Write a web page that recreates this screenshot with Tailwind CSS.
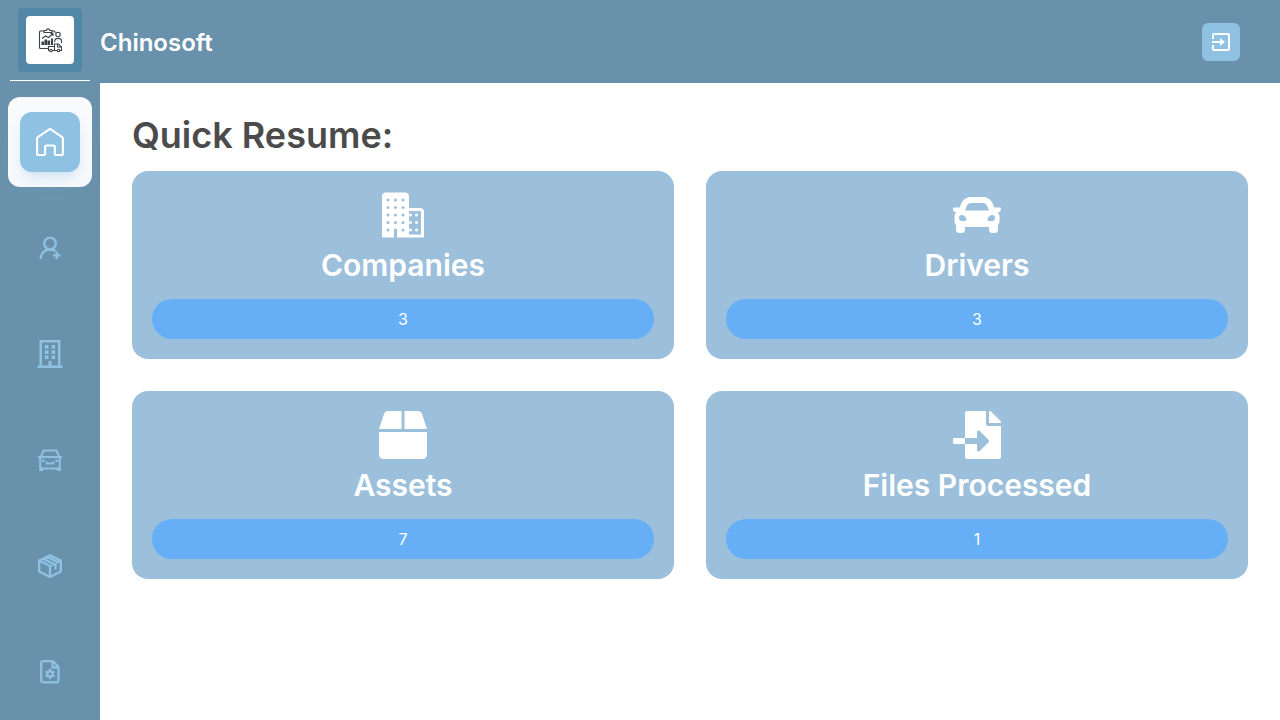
<!DOCTYPE html>
<html lang="en">
<head>
<meta charset="utf-8">
<meta name="viewport" content="width=device-width, initial-scale=1">
<title>Chinosoft</title>
<script src="https://cdn.jsdelivr.net/npm/@tailwindcss/browser@4"></script>
</head>
<body class="flex min-h-screen bg-white font-['Inter','Liberation_Sans',sans-serif]">
<aside class="flex w-[100px] shrink-0 flex-col items-center bg-[#6991ab]">
  <div class="flex w-20 justify-center border-b border-white py-2">
    <a href="#" aria-label="Chinosoft" class="rounded-[4px] bg-[#5287a8] p-2">
      <span class="flex size-12 items-center justify-center rounded-[4px] bg-white">
        <svg class="size-7" viewBox="0 0 28 28" fill="none" stroke="#3d4247" stroke-width="1.100">
          <path d="M7.500 5H4.500a1 1 0 0 0-1 1v15.500a1 1 0 0 0 1 1H12M16.500 5H18a1 1 0 0 1 1 1v1M8 6.500v-2h2.500c0-2.200 3.200-2.200 3.200 0H16v2z"/>
          <path d="M6 18.500v-2.500h1.500v2.500zM9 18.500v-4.500h1.500v4.500zM12 18.500v-3.500h1.500v3.500zM15.500 18.500v-5.500h1v5.500z" fill="#3d4247"/>
          <path d="M6 12.500l3.500-2.500 3 1.500 4.500-4M14.500 7.500H17V10"/>
          <circle cx="22" cy="8.500" r="2.200"/>
          <path d="M18.800 16v-1c0-3.500 6.700-3.500 6.700 0v2M12.500 20.500h6v4h-6zM18.500 18h4l3 3v3.500h-7zM21.500 18v3h4"/>
          <circle cx="15" cy="24.500" r="1.300" fill="#fff"/><circle cx="22.500" cy="24.500" r="1.300" fill="#fff"/>
        </svg>
      </span>
    </a>
  </div>
  <nav class="mt-4 flex w-full flex-col gap-4 px-2 text-[#8fc1e3]">
    <a href="#" aria-label="Home" aria-current="page" class="flex h-[90px] items-center justify-center rounded-xl bg-[#f8fafc] shadow-xl shadow-[#8fc1e3]/5">
      <span class="flex size-15 items-center justify-center rounded-xl bg-[#8fc1e3] text-white shadow-lg shadow-[#8fc1e3]/30">
        <svg class="size-8" viewBox="0 0 32 32" fill="none" stroke="currentColor" stroke-width="2.200" stroke-linejoin="round"><path d="M15.200 3.300q.8-.6 1.600 0l11.300 7.900q.8.600.8 1.600V28a1 1 0 0 1-1 1h-6a1 1 0 0 1-1-1v-7a1.500 1.500 0 0 0-1.500-1.500h-6.800A1.500 1.500 0 0 0 11.100 21v7a1 1 0 0 1-1 1H4.100a1 1 0 0 1-1-1V12.800q0-1 .8-1.600z"/></svg>
      </span>
    </a>
    <a href="#" aria-label="Drivers" class="flex h-[90px] items-center justify-center">
      <svg class="size-8" viewBox="0 0 32 32" fill="none" stroke="currentColor" stroke-width="2.300"><circle cx="16" cy="11.500" r="5.800"/><path d="M6.700 27c0-5.800 3.800-9.500 9.300-9.500 2 0 4 .4 5.500 1.500M22.700 19.500v7.500M19 23.300h7.600"/></svg>
    </a>
    <a href="#" aria-label="Companies" class="flex h-[90px] items-center justify-center">
      <svg class="size-8" viewBox="0 0 32 32"><path fill="currentColor" fill-rule="evenodd" d="M5.500 2h21v25.500H28.500V30h-25v-2.500h2zM8 4.500v23h6.500V23h3v4.500H24v-23zM10.800 7h3.700v3.700h-3.700zm6.700 0h3.700v3.700h-3.700zM10.800 12.200h3.700v3.700h-3.700zm6.700 0h3.700v3.700h-3.700zM10.800 17.400h3.700v3.700h-3.700zm6.700 0h3.700v3.700h-3.700z"/></svg>
    </a>
    <a href="#" aria-label="Vehicles" class="flex h-[90px] items-center justify-center">
      <svg class="size-8" viewBox="0 0 32 32" fill="none" stroke="currentColor" stroke-width="2"><path d="M6.800 13 9.500 6.500h13l2.700 6.500M4 13h24M6.200 13v11.500h19.600V13M6.200 24v2h2v-1.500M25.800 24v2h-2v-1.500M12.500 17.500v2h7v-2"/><path d="M8 15.500h2.500V18H8zm13.500 0H24V18h-2.500z" fill="currentColor" stroke="none"/></svg>
    </a>
    <a href="#" aria-label="Assets" class="flex h-[90px] items-center justify-center">
      <svg class="size-8" viewBox="0 0 32 32" fill="none" stroke="currentColor" stroke-width="2.400" stroke-linejoin="round"><path d="M16 5.300 26.800 10.500v11L16 27 5.200 21.500v-11zM5.200 10.500 16 16l10.800-5.500M16 16v11M9 8.700l11 5.500M13 6.700l10.500 5.300M21.500 14v5.500"/></svg>
    </a>
    <a href="#" aria-label="Files" class="flex h-[90px] items-center justify-center">
      <svg class="size-8" viewBox="0 0 32 32" fill="none" stroke="currentColor" stroke-width="2.300" stroke-linejoin="round"><path d="M9.200 5.200H19l5.500 5.500v13.600a2 2 0 0 1-2 2H9.200a2 2 0 0 1-2-2V7.200a2 2 0 0 1 2-2zM18.500 5.500v6h6"/><circle cx="16" cy="18" r="2.600"/><path d="M16 12.800v2.700M16 20.500v2.700M11.500 15.400l2.300 1.300M18.200 19.300l2.300 1.300M11.500 20.600l2.300-1.300M18.200 16.700l2.300-1.300"/></svg>
    </a>
  </nav>
</aside>
<div class="flex min-w-0 grow flex-col">
  <header class="flex h-[83px] items-center justify-between bg-[#6991ab] pr-10">
    <h1 class="pt-0.5 text-2xl font-semibold text-white">Chinosoft</h1>
    <button type="button" aria-label="Log out" class="flex size-[38px] items-center justify-center rounded-md bg-[#8fc1e3] text-white">
      <svg class="size-6" viewBox="0 0 24 24" fill="currentColor"><path d="M3 9V5a2 2 0 0 1 2-2h14a2 2 0 0 1 2 2v14a2 2 0 0 1-2 2H5a2 2 0 0 1-2-2v-4h2v4h14V5H5v4zM3 11h8V8l5 4-5 4v-3H3z"/></svg>
    </button>
  </header>
  <main class="px-8 pt-8">
    <h2 class="mb-4 text-4xl leading-10 font-semibold text-[#4b4b4b]">Quick Resume:</h2>
    <div class="grid grid-cols-2 gap-8 text-white">
      <section class="flex flex-col items-center rounded-2xl bg-[#9cc0dc] p-5">
        <svg class="size-12" viewBox="0 0 48 48" fill="currentColor"><path d="M7 1.500h19a4 4 0 0 1 4 4V17h11a4 4 0 0 1 4 4v24.500a1 1 0 0 1-1 1H18V38h-3v8.500H4a1 1 0 0 1-1-1v-40a4 4 0 0 1 4-4zM30 20v23.500h12V21a1 1 0 0 0-1-1z" fill-rule="evenodd"/>
          <path d="M9 9h0M16.500 9h0M24 9h0M9 16.500h0M16.500 16.500h0M24 16.500h0M9 24h0M16.500 24h0M24 24h0M9 31.500h0M16.500 31.500h0M24 31.500h0M9 39h0M24 39h0" stroke="#9cc0dc" stroke-width="3" stroke-linecap="round"/>
          <path d="M16.500 39h0" stroke="#9cc0dc" stroke-width="3" stroke-linecap="round"/>
          <path d="M31.500 24h0M37.500 24h0M31.500 31.500h0M37.500 31.500h0M31.500 39h0M37.500 39h0" stroke="currentColor" stroke-width="3" stroke-linecap="round"/></svg>
        <h3 class="mt-2 text-3xl leading-9 font-semibold">Companies</h3>
        <p class="mt-4 w-full rounded-full bg-[#66aff7] py-2 text-center leading-6">3</p>
      </section>
      <section class="flex flex-col items-center rounded-2xl bg-[#9cc0dc] p-5">
        <svg class="size-12" viewBox="0 0 512 512" fill="currentColor"><path d="M499.990 176h-59.870l-16.640-41.600C406.380 91.630 365.570 64 319.500 64h-127c-46.060 0-86.880 27.630-103.990 70.400L71.870 176H12.010C4.200 176-1.530 183.340.370 190.910l6 24C7.700 220.250 12.500 224 18.010 224h20.070C24.650 235.730 16 252.780 16 272v48c0 16.120 6.160 30.670 16 41.930V416c0 17.670 14.330 32 32 32h32c17.670 0 32-14.330 32-32v-32h256v32c0 17.670 14.330 32 32 32h32c17.670 0 32-14.330 32-32v-54.070c9.840-11.250 16-25.800 16-41.930v-48c0-19.220-8.650-36.270-22.070-48H494c5.510 0 10.310-3.750 11.640-9.090l6-24c1.890-7.570-3.840-14.910-11.650-14.910zm-352.060-17.830c7.290-18.220 24.940-30.170 44.570-30.170h127c19.630 0 37.280 11.950 44.570 30.170L384 208H128l19.930-49.830zM96 319.800c-19.200 0-32-12.760-32-31.900S76.800 256 96 256s48 28.710 48 47.850-28.800 15.950-48 15.950zm320 0c-19.200 0-48 3.190-48-15.950S396.800 256 416 256s32 12.760 32 31.900-12.800 31.900-32 31.900z"/></svg>
        <h3 class="mt-2 text-3xl leading-9 font-semibold">Drivers</h3>
        <p class="mt-4 w-full rounded-full bg-[#66aff7] py-2 text-center leading-6">3</p>
      </section>
      <section class="flex flex-col items-center rounded-2xl bg-[#9cc0dc] p-5">
        <svg class="size-12" viewBox="0 0 512 512" fill="currentColor"><path d="M509.500 184.600L458.900 32.800C452.400 13.200 434.100 0 413.400 0H272v192h238.700c-.4-2.500-.4-5-1.200-7.400zM240 0H98.600c-20.700 0-39 13.200-45.500 32.800L2.500 184.600c-.8 2.400-.8 4.900-1.200 7.400H240V0zM0 224v240c0 26.500 21.500 48 48 48h416c26.500 0 48-21.500 48-48V224H0z"/></svg>
        <h3 class="mt-2 text-3xl leading-9 font-semibold">Assets</h3>
        <p class="mt-4 w-full rounded-full bg-[#66aff7] py-2 text-center leading-6">7</p>
      </section>
      <section class="flex flex-col items-center rounded-2xl bg-[#9cc0dc] p-5">
        <svg class="size-12" viewBox="0 0 512 512" fill="currentColor"><path d="M16 288c-8.800 0-16 7.200-16 16v32c0 8.800 7.200 16 16 16h112v-64H16zm489-183L407.100 7c-4.500-4.500-10.600-7-17-7H384v128h128v-6.100c0-6.300-2.500-12.400-7-16.900zm-153 31V0H152c-13.300 0-24 10.700-24 24v264h128v-65.200c0-14.300 17.300-21.400 27.400-11.300L379 308c6.600 6.700 6.600 17.400 0 24l-95.700 96.400c-10.100 10.100-27.400 3-27.400-11.300V352H128v136c0 13.300 10.700 24 24 24h336c13.300 0 24-10.700 24-24V160H376c-13.200 0-24-10.800-24-24z"/></svg>
        <h3 class="mt-2 text-3xl leading-9 font-semibold">Files Processed</h3>
        <p class="mt-4 w-full rounded-full bg-[#66aff7] py-2 text-center leading-6">1</p>
      </section>
    </div>
  </main>
</div>
</body>
</html>
